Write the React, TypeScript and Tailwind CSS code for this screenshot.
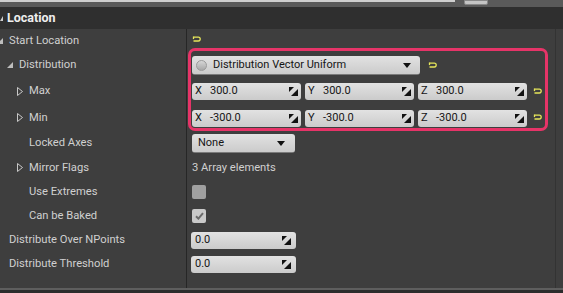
import React from 'react';

const ResetIcon = () => (
  <svg width="9" height="8" viewBox="0 0 9 8" className="shrink-0">
    <path d="M1.5 1.2h4.8a1.9 1.9 0 0 1 0 3.8H1.5" fill="none" stroke="#e6e65a" strokeWidth="1.3" />
    <path d="M1.5 0.5v2.6" fill="none" stroke="#e6e65a" strokeWidth="1.3" />
  </svg>
);

const SpinIcon = () => (
  <svg width="9" height="9" viewBox="0 0 9 9" className="shrink-0">
    <polygon points="0,0 5,0 0,5" fill="#111" />
    <polygon points="9,2 9,9 2,9" fill="#111" />
  </svg>
);

const Caret = () => (
  <svg width="8" height="5" viewBox="0 0 8 5" className="shrink-0">
    <polygon points="0,0 8,0 4,5" fill="#111" />
  </svg>
);

const Expanded = () => (
  <svg width="6" height="6" viewBox="0 0 6 6">
    <polygon points="6,0 6,6 0,6" fill="#bdbdbd" />
  </svg>
);

const Collapsed = () => (
  <svg width="6" height="9" viewBox="0 0 6 9">
    <polygon points="0.5,0.5 5.5,4.5 0.5,8.5" fill="none" stroke="#c8c8c8" strokeWidth="1" />
  </svg>
);

const field = 'flex items-center h-[17px] rounded-[3px] bg-gradient-to-b from-[#e2e2e2] to-[#cbcbcb] text-[#151515] text-[11px]';

function Row({ h, label, indent = 0, icon, children }: { h: number; label: string; indent?: number; icon?: 'open' | 'closed'; children?: React.ReactNode }) {
  return (
    <div className="flex" style={{ height: h }}>
      <div className="w-[187px] shrink-0 flex items-center border-r border-[#262626]">
        <div className="flex items-center" style={{ marginLeft: indent }}>
          <span className="w-[12px] flex items-center">
            {icon === 'open' && <Expanded />}
            {icon === 'closed' && <Collapsed />}
          </span>
          <span className="text-[11.2px] text-[#d0d0d0]">{label}</span>
        </div>
      </div>
      <div className="flex-1 flex items-center pl-[5px]">{children}</div>
    </div>
  );
}

function Vec({ vals }: { vals: string[] }) {
  const axes = ['X', 'Y', 'Z'];
  return (
    <div className="flex items-center gap-[4px]">
      {vals.map((v, i) => (
        <div key={i} className={`${field} w-[109px] pl-[3px] pr-[3px]`}>
          <span className="w-[15px]">{axes[i]}</span>
          <span className="flex-1">{v}</span>
          <SpinIcon />
        </div>
      ))}
      <span className="ml-[2px]"><ResetIcon /></span>
    </div>
  );
}

export default function App() {
  return (
    <div className="relative w-[563px] h-[293px] overflow-hidden bg-[#3e3e3e]" style={{ fontFamily: 'Roboto, "Liberation Sans", sans-serif' }}>
      {/* top strip */}
      <div className="relative h-[7px] bg-[#5a5a5a]">
        <div className="absolute left-0 top-0 w-[455px] h-[2px] bg-[#cfcfcf]" />
        <div className="absolute left-[464px] top-0 w-[24px] h-[5px] bg-[#c4c4c4] border border-[#888] rounded-b-[2px]" />
      </div>

      {/* header */}
      <div className="h-[22px] bg-[#2f2f2f] flex items-center">
        <span className="w-[7px] flex items-center"><svg width="3" height="5" viewBox="0 0 3 5"><polygon points="3,0 3,5 0,5" fill="#cfcfcf" /></svg></span>
        <span className="text-[12.5px] font-bold text-[#eeeeee]">Location</span>
      </div>

      <div className="flex">
        <div className="w-[555px]">
          <Row h={24} label="Start Location" icon="open" indent={-3}>
            <span className="-mt-[3px]"><ResetIcon /></span>
          </Row>
          <Row h={25} label="Distribution" icon="open" indent={7}>
            <div className="flex items-center">
              <div className={`${field} w-[228px] h-[19px] pl-[4px] pr-[9px] border-b border-[#7a7a7a]`}>
                <span className="w-[11px] h-[11px] rounded-full bg-gradient-to-b from-[#d6d6d6] to-[#a8a8a8] border border-[#9a9a9a] mr-[6px]" />
                <span className="flex-1">Distribution Vector Uniform</span>
                <Caret />
              </div>
              <span className="ml-[8px]"><ResetIcon /></span>
            </div>
          </Row>
          <Row h={27} label="Max" icon="closed" indent={17}>
            <Vec vals={['300.0', '300.0', '300.0']} />
          </Row>
          <Row h={26} label="Min" icon="closed" indent={17}>
            <Vec vals={['-300.0', '-300.0', '-300.0']} />
          </Row>
          <Row h={25} label="Locked Axes" indent={17}>
            <div className={`${field} w-[103px] h-[19px] pl-[6px] pr-[10px] border-b border-[#7a7a7a]`}>
              <span className="flex-1">None</span>
              <Caret />
            </div>
          </Row>
          <Row h={24} label="Mirror Flags" icon="closed" indent={17}>
            <span className="text-[11.2px] text-[#d0d0d0]">3 Array elements</span>
          </Row>
          <Row h={24} label="Use Extremes" indent={17}>
            <div className="w-[14px] h-[14px] rounded-[2px] bg-[#a0a0a0]" />
          </Row>
          <Row h={24} label="Can be Baked" indent={17}>
            <div className="w-[14px] h-[14px] rounded-[2px] bg-[#c9c9c9] flex items-center justify-center">
              <svg width="9" height="8" viewBox="0 0 9 8"><path d="M1 4.2l2.4 2.4L8 1.2" fill="none" stroke="#6a6a6a" strokeWidth="2" /></svg>
            </div>
          </Row>
          <Row h={24} label="Distribute Over NPoints" indent={-3}>
            <div className={`${field} w-[105px] pl-[4px] pr-[5px] -ml-[1px]`}>
              <span className="flex-1">0.0</span>
              <SpinIcon />
            </div>
          </Row>
          <Row h={25} label="Distribute Threshold" indent={-3}>
            <div className={`${field} w-[105px] pl-[4px] pr-[5px] -ml-[1px]`}>
              <span className="flex-1">0.0</span>
              <SpinIcon />
            </div>
          </Row>
          <Row h={11} label="" />
        </div>
        <div className="flex-1 border-l border-[#333]" />
      </div>

      <div className="h-[2px] bg-[#5e5e5e]" />
      <div className="h-[4px] bg-[#2c2c2c]" />

      {/* highlight overlay */}
      <div className="absolute left-[188px] top-[48px] w-[360px] h-[83px] border-[3px] border-[#e63468] rounded-[7px] pointer-events-none" />
    </div>
  );
}
